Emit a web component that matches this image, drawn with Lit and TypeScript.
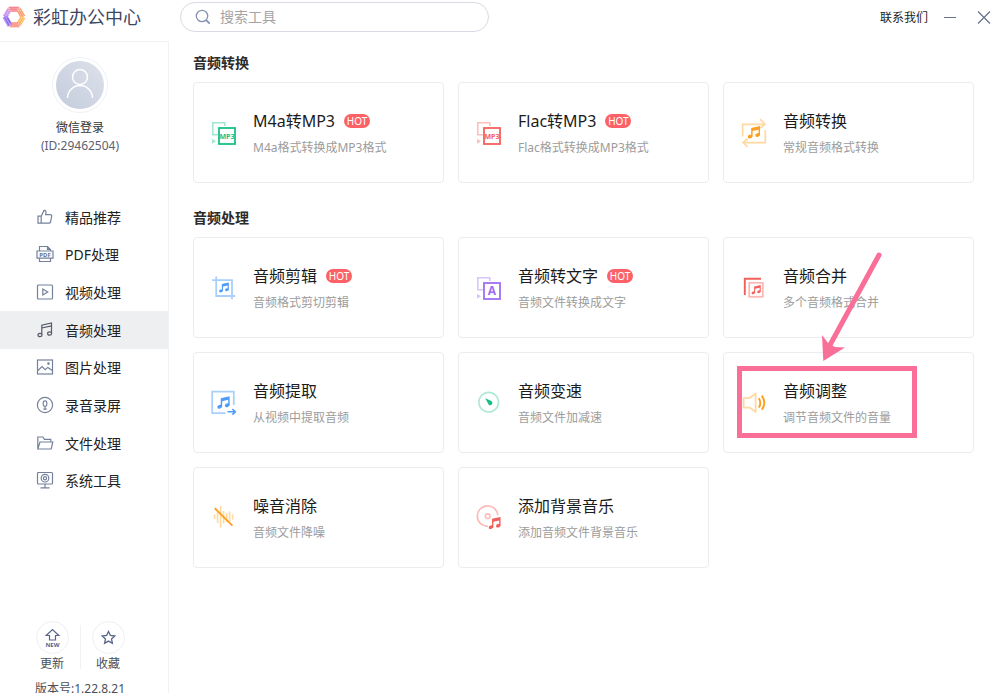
import { LitElement, html, css, svg, nothing } from "lit";
import { customElement, property, state } from "lit/decorators.js";
import { classMap } from "lit/directives/class-map.js";

/* ---------- shared drawing pieces ---------- */

const note = (x: number, y: number, s: number, color: string) => svg`
  <g transform="translate(${x} ${y}) scale(${s})" fill=${color} stroke="none">
    <ellipse cx="2.2" cy="10.4" rx="2.3" ry="1.8" transform="rotate(-18 2.2 10.4)"></ellipse>
    <ellipse cx="9.6" cy="8.9" rx="2.3" ry="1.8" transform="rotate(-18 9.6 8.9)"></ellipse>
    <path d="M3.3 1.9 12 0v9h-1.4V3.6L4.7 4.9v5.7H3.3z"></path>
  </g>`;

const stacked = (dark: string, label: string, size: number, baseline: number) => svg`
  <g fill="none" stroke=${dark}>
    <path d="M7 14.8H1.8V2.8h12V6" stroke-width="1.6" opacity=".4"></path>
    <rect x="8" y="8" width="16" height="16" stroke-width="1.8"></rect>
    <path d="M1 18.8v5l4-2.5z" fill=${dark} stroke="none" opacity=".4"></path>
  </g>
  <text x="16" y=${baseline} text-anchor="middle" font-size=${size} font-weight="700" fill=${dark}>${label}</text>`;

const toolIcons: Record<string, unknown> = {
  m4a: stacked("#17c286", "MP3", 7, 18.6),
  flac: stacked("#f4605c", "MP3", 7, 18.6),
  text: stacked("#9f6ff0", "A", 12, 20.4),
  convert: svg`
    <g fill="none" stroke="#ffd9a0" stroke-width="1.7">
      <path d="M1.6 16.5V4.3H24M19-.8l5 5.1-4.6 3.8"></path>
      <path d="M24.3 10v12.6H2M6.6 18.6 2 22.6l4.6 4.2"></path>
    </g>${note(6.8, 6, 1.02, "#fda01f")}`,
  cut: svg`
    <path d="M5.2 1.5V21H24.2M1 5.2H21V24.2" fill="none" stroke="#a9d0fd" stroke-width="1.8"></path>
    ${note(8.2, 7.6, 0.8, "#4f9bfb")}`,
  merge: svg`
    <path d="M3.8 20V3.8H20" fill="none" stroke="#f0605a" stroke-width="1.9"></path>
    <rect x="8.2" y="7.8" width="13.6" height="14" fill="none" stroke="#fbb8b6" stroke-width="1.8"></rect>
    ${note(10.6, 10, 0.76, "#f4605c")}`,
  extract: svg`
    <path d="M14.6 23.2H1.2V1.6H22.8V15" fill="none" stroke="#a9d0fd" stroke-width="1.8"></path>
    <path d="M16.5 21.8H24M21.4 19l2.9 2.8-2.9 2.8" fill="none" stroke="#4f9bfb" stroke-width="1.6"></path>
    ${note(6.4, 6.2, 1.02, "#4f9bfb")}`,
  speed: svg`
    <circle cx="12.7" cy="12.2" r="9.8" fill="none" stroke="#b0ead5" stroke-width="1.7"></circle>
    <path d="M9.2 8.2 15.4 11a2.2 2.2 0 0 1-2.6 3.7z" fill="#13bf83"></path>`,
  volume: svg`
    <path d="M2.6 8.2H8.2L14.6 3.6V22L8.6 17.6H2.6z" fill="none" stroke="#ffd9a0" stroke-width="1.8" stroke-linejoin="round"></path>
    <path d="M17.8 8.2q3 4.7 0 9.4M20.8 5.6q5 7.2 0 14.2" fill="none" stroke="#fda01f" stroke-width="1.9"></path>`,
  denoise: svg`
    <path d="M3.6 9.5v4.5M6.6 7v11M9.6 1v21.5M12.6 6v12.5M15.6 8v9M18.6 6.5v10M21.6 9.5v5"
      fill="none" stroke="#ffd9a0" stroke-width="1.6"></path>
    <path d="M3.8 3.3 21.4 20.6" stroke="#fda01f" stroke-width="1.9"></path>`,
  music: svg`
    <path d="M12 21.4A10.3 10.3 0 1 1 21.9 10.4" fill="none" stroke="#fbbcba" stroke-width="1.7"></path>
    <circle cx="11.7" cy="11.2" r="2.3" fill="none" stroke="#fbbcba" stroke-width="1.6"></circle>
    ${note(12.8, 12, 0.98, "#f0605a")}`,
};

const navIcons: Record<string, unknown> = {
  like: svg`<path d="M2 8.2h3.2v7H2zM5.2 8.2 8 2.4c2.2-.3 2.2 1.400 1.700 4.200h4.600c1.200 0 1.600.8 1.400 1.600l-1.200 5.800c-.2.800-.7 1.200-1.500 1.200H5.200"></path>`,
  pdf: svg`<path d="M3.500 5.500V1.500h8l3 3v1.400M11.500 1.500v3h3M3.500 13.500v3h11v-3M1 6h16v7.200H1z"></path>
    <text x="9" y="12" text-anchor="middle" font-size="6" font-weight="700" fill="#63718c" stroke="none">PDF</text>`,
  video: svg`<rect x="1.500" y="2" width="15" height="14" rx="1"></rect><path d="M6.800 6v6l5-3z"></path>`,
  audio: svg`<path d="M5.800 13.500V4.200L15.500 2v10M5.800 7l9.700-2.200"></path>
    <ellipse cx="4" cy="14" rx="2" ry="1.700"></ellipse><ellipse cx="13.600" cy="12.500" rx="2" ry="1.700"></ellipse>`,
  image: svg`<rect x="1.500" y="2" width="15" height="14"></rect><path d="M2 12.500 6 8.500l3.200 3.200 2.600-2.300 4.500 3.200"></path>
    <circle cx="12.500" cy="5.600" r=".7"></circle>`,
  record: svg`<circle cx="9" cy="9" r="7.600"></circle><rect x="7.200" y="4.800" width="3.600" height="5.600" rx="1.800"></rect>
    <path d="M9 10.500V13.200M7.300 13.200h3.400"></path>`,
  folder: svg`<path d="M1.800 15V3h5l1.600 2.400h6.400V8M1.800 15 4 8h12.800l-1.600 7z"></path>`,
  system: svg`<rect x="1.500" y="1.500" width="15" height="11.500" rx="1"></rect><circle cx="9" cy="7.200" r="3.800"></circle>
    <circle cx="9" cy="7.200" r="1.600"></circle><path d="M9 13v3.500M4.500 16.800h9"></path>`,
};

interface Tool { icon: string; title: string; desc: string; hot?: boolean; marked?: boolean; }
interface Group { title: string; tools: Tool[]; }

const groups: Group[] = [
  {
    title: "音频转换",
    tools: [
      { icon: "m4a", title: "M4a转MP3", desc: "M4a格式转换成MP3格式", hot: true },
      { icon: "flac", title: "Flac转MP3", desc: "Flac格式转换成MP3格式", hot: true },
      { icon: "convert", title: "音频转换", desc: "常规音频格式转换" },
    ],
  },
  {
    title: "音频处理",
    tools: [
      { icon: "cut", title: "音频剪辑", desc: "音频格式剪切剪辑", hot: true },
      { icon: "text", title: "音频转文字", desc: "音频文件转换成文字", hot: true },
      { icon: "merge", title: "音频合并", desc: "多个音频格式合并" },
      { icon: "extract", title: "音频提取", desc: "从视频中提取音频" },
      { icon: "speed", title: "音频变速", desc: "音频文件加减速" },
      { icon: "volume", title: "音频调整", desc: "调节音频文件的音量", marked: true },
      { icon: "denoise", title: "噪音消除", desc: "音频文件降噪" },
      { icon: "music", title: "添加背景音乐", desc: "添加音频文件背景音乐" },
    ],
  },
];

const navItems = [
  ["like", "精品推荐"],
  ["pdf", "PDF处理"],
  ["video", "视频处理"],
  ["audio", "音频处理"],
  ["image", "图片处理"],
  ["record", "录音录屏"],
  ["folder", "文件处理"],
  ["system", "系统工具"],
];

/* ---------- tool card ---------- */

@customElement("tool-card")
class ToolCard extends LitElement {
  @property({ attribute: false }) tool!: Tool;

  static styles = css`
    :host { display: block; position: relative; }
    .card {
      display: flex; align-items: center; gap: 16px;
      box-sizing: border-box; width: 100%; height: 101px;
      padding: 0 17px; border: 1px solid #ececee; border-radius: 4px;
      background: #fff; font: inherit; text-align: left; cursor: pointer;
    }
    .icon { flex: none; width: 26px; height: 26px; overflow: visible; }
    .texts { display: flex; flex-direction: column; gap: 6px; min-width: 0; }
    .title { display: flex; align-items: center; gap: 9px; font-size: 16px; line-height: 24px; color: #1b1b1b; white-space: nowrap; }
    .hot {
      width: 26px; border-radius: 7px; background: #fb6167; color: #fff;
      font-size: 10px; line-height: 14px; text-align: center;
    }
    .desc { font-size: 12px; line-height: 18px; color: #9c9c9c; white-space: nowrap; }
    .frame {
      position: absolute; left: 14px; top: 14px; box-sizing: border-box;
      width: 180px; height: 72px; border: 5px solid #fa6f98; pointer-events: none;
    }
    .arrow { position: absolute; left: 92px; top: -104px; width: 70px; height: 116px; pointer-events: none; }
  `;

  render() {
    const t = this.tool;
    return html`
      <button class="card" type="button">
        <svg class="icon" viewBox="0 0 26 26" aria-hidden="true">${toolIcons[t.icon]}</svg>
        <span class="texts">
          <span class="title">${t.title}${t.hot ? html`<span class="hot">HOT</span>` : nothing}</span>
          <span class="desc">${t.desc}</span>
        </span>
      </button>
      ${t.marked
        ? html`<div class="frame"></div>
            <svg class="arrow" viewBox="0 0 70 116" aria-hidden="true">
              <path d="M64 7 15 97" stroke="#fa6f98" stroke-width="5" stroke-linecap="round"></path>
              <path d="M7 87 13 95 20 99 30 99.500 8.300 113z" fill="#fa6f98"></path>
            </svg>`
        : nothing}
    `;
  }
}

/* ---------- application shell ---------- */

@customElement("app-root")
class AppRoot extends LitElement {
  @state() private active = "audio";

  static styles = css`
    :host {
      display: grid; grid-template: 41px minmax(0, 1fr) / 169px minmax(0, 1fr);
      height: 100vh; overflow: hidden; background: #fff; color: #222;
      font-family: "Noto Sans", "Noto Sans CJK SC", sans-serif;
    }
    button { font: inherit; color: inherit; cursor: pointer; }
    .brand { display: flex; align-items: center; gap: 7px; padding: 0 0 7px 2px; font-size: 18px; line-height: 24px; color: #3d4663; white-space: nowrap; }
    .logo { flex: none; width: 24px; height: 24px; }
    .topbar { display: flex; align-items: flex-start; padding: 2px 8px 0 11px; }
    .search {
      display: flex; align-items: center; gap: 9px; box-sizing: border-box;
      width: 309px; height: 30px; padding: 0 14px; border: 1px solid #d9dbe4; border-radius: 15px;
    }
    .search svg { flex: none; width: 16px; height: 16px; }
    .search input { flex: 1; min-width: 0; border: 0; padding: 0; outline: none; background: none; font: inherit; font-size: 14px; line-height: 20px; color: #333; }
    .search input::placeholder { color: #a4a4a4; opacity: 1; }
    .window { display: flex; align-items: center; gap: 14px; height: 30px; margin-left: auto; }
    .contact { font-size: 12px; color: #222; text-decoration: none; }
    .win { display: block; padding: 0; border: 0; background: none; width: 16px; height: 16px; }
    .win + .win { margin-left: 4px; }
    .win svg { display: block; width: 16px; height: 16px; }

    .sidebar {
      display: flex; flex-direction: column; min-height: 0;
      border-top: 1px solid #f1f2f5; border-right: 1px solid #f1f2f5;
    }
    .user { display: flex; flex-direction: column; align-items: center; padding: 15px 8px 0 0; border: 0; background: none; font-size: 12px; line-height: 18px; color: #333; }
    .avatar { width: 56px; height: 56px; margin-bottom: 6px; }
    .uid { color: #5c6270; }
    .nav { display: grid; grid-auto-rows: 1fr; height: 301px; margin-top: 43px; }
    .item { display: flex; align-items: center; gap: 11px; padding-left: 36px; font-size: 14px; color: #222; text-decoration: none; }
    .item.on { background: #eeeff1; }
    .item svg { flex: none; width: 18px; height: 18px; fill: none; stroke: #75819b; stroke-width: 1.2; }
    .item.on svg { stroke: #555b68; }
    .foot { display: flex; flex-direction: column; align-items: center; margin: auto 8px -5px 0; font-size: 12px; line-height: 18px; color: #4c4f58; }
    .actions { display: flex; align-items: center; gap: 11px; margin-bottom: 7px; }
    .action { display: flex; flex-direction: column; align-items: center; gap: 1px; padding: 0; border: 0; background: none; }
    .action svg { width: 33px; height: 33px; }
    .rule { width: 1px; height: 44px; background: #f1f2f5; }

    .main { overflow: auto; padding: 12px 26px 24px 24px; scrollbar-width: none; }
    .group + .group { margin-top: 25px; }
    .heading { margin: 0 0 9px; font-size: 14px; line-height: 20px; font-weight: 700; color: #2b2b2b; }
    .cards { display: grid; grid-template-columns: repeat(3, minmax(0, 1fr)); gap: 14px; }
  `;

  render() {
    return html`
      <div class="brand">
        <svg class="logo" viewBox="0 0 24 24" aria-hidden="true">
          <g fill="none" stroke-width="5">
            <path d="M3 12 7.500 4.200" stroke="#c792ee"></path>
            <path d="M6.500 4.200H17.500" stroke="#f57683"></path>
            <path d="M16.500 4.200 21 12" stroke="#fb9a6a"></path>
            <path d="M21 12 16.500 19.800" stroke="#fdb75a"></path>
            <path d="M17.500 19.800H7.500" stroke="#f98a7c"></path>
            <path d="M8 20.500 3 11.500" stroke="#8d68ee"></path>
          </g>
          <g fill="none" stroke="#fff" stroke-width=".5" opacity=".75">
            <path d="M1.500 10.500 6.500 2M3 12 8 3.500M4.500 13 9 5M6 3.200H18M6 5.200H18M16.500 2 22.500 12.500M15 3.500 20.500 13M22 13 17.500 21M20 12 15.500 20M7 19H17M7 21H17M1.500 12.500 6.500 21.500M3.500 12 8.500 20.500"></path>
          </g>
        </svg>
        <span>彩虹办公中心</span>
      </div>

      <header class="topbar">
        <label class="search">
          <svg viewBox="0 0 16 16" fill="none" stroke="#8792ad" stroke-width="1.300" aria-hidden="true">
            <circle cx="7" cy="7" r="5.700"></circle><path d="m11.200 11.200 3.500 3.500" stroke-width="1.800"></path>
          </svg>
          <input type="text" placeholder="搜索工具" aria-label="搜索工具" />
        </label>
        <div class="window">
          <a class="contact" href="#contact">联系我们</a>
          <button class="win" type="button" aria-label="最小化">
            <svg viewBox="0 0 16 16" stroke="#65718e"><path d="M2 8.500H14"></path></svg>
          </button>
          <button class="win" type="button" aria-label="关闭">
            <svg viewBox="0 0 16 16" stroke="#65718e" stroke-width="1.200"><path d="M2 2.500 14 14.500M14 2.500 2 14.500"></path></svg>
          </button>
        </div>
      </header>

      <aside class="sidebar">
        <button class="user" type="button">
          <svg class="avatar" viewBox="0 0 56 56" fill="none" aria-hidden="true">
            <defs>
              <linearGradient id="av" x1="1" y1="0" x2="0" y2="1">
                <stop offset="0" stop-color="#dde1ea"></stop><stop offset="1" stop-color="#c3ccdc"></stop>
              </linearGradient>
            </defs>
            <circle cx="28" cy="28" r="27.500" stroke="#eff1f7"></circle>
            <circle cx="28" cy="28" r="24" fill="url(#av)"></circle>
            <circle cx="28" cy="20" r="7.500" stroke="#fff" stroke-width="1.500"></circle>
            <path d="M15.500 41a12.500 12.500 0 0 1 25 0" stroke="#fff" stroke-width="1.500"></path>
          </svg>
          <span>微信登录</span>
          <span class="uid">(ID:29462504)</span>
        </button>

        <nav class="nav">
          ${navItems.map(
            ([id, label]) => html`
              <a class=${classMap({ item: true, on: this.active === id })} href="#${id}" @click=${() => (this.active = id)}>
                <svg viewBox="0 0 18 18" aria-hidden="true">${navIcons[id]}</svg>${label}
              </a>`
          )}
        </nav>

        <div class="foot">
          <div class="actions">
            <button class="action" type="button">
              <svg viewBox="0 0 33 33" fill="none" stroke="#58658a" stroke-width="1.200" aria-hidden="true">
                <circle cx="16.500" cy="16.500" r="16" stroke="#eceef2" stroke-width="1"></circle>
                <path d="M13.500 19v-4.500h-3.300l6.300-6 6.300 6h-3.300V19z"></path>
                <text x="16.500" y="25.500" text-anchor="middle" font-size="6" font-weight="700" fill="#58658a" stroke="none">NEW</text>
              </svg>
              <span>更新</span>
            </button>
            <span class="rule"></span>
            <button class="action" type="button">
              <svg viewBox="0 0 33 33" fill="none" stroke="#58658a" stroke-width="1.300" aria-hidden="true">
                <circle cx="16.500" cy="16.500" r="16" stroke="#eceef2" stroke-width="1"></circle>
                <path d="m16.500 10.500 1.900 4 4.400.5-3.300 3 .9 4.300-3.900-2.200-3.900 2.200.9-4.300-3.300-3 4.400-.5z"></path>
              </svg>
              <span>收藏</span>
            </button>
          </div>
          <span>版本号:1.22.8.21</span>
        </div>
      </aside>

      <main class="main">
        ${groups.map(
          (g) => html`
            <section class="group">
              <h2 class="heading">${g.title}</h2>
              <div class="cards">${g.tools.map((t) => html`<tool-card .tool=${t}></tool-card>`)}</div>
            </section>`
        )}
      </main>
    `;
  }
}
